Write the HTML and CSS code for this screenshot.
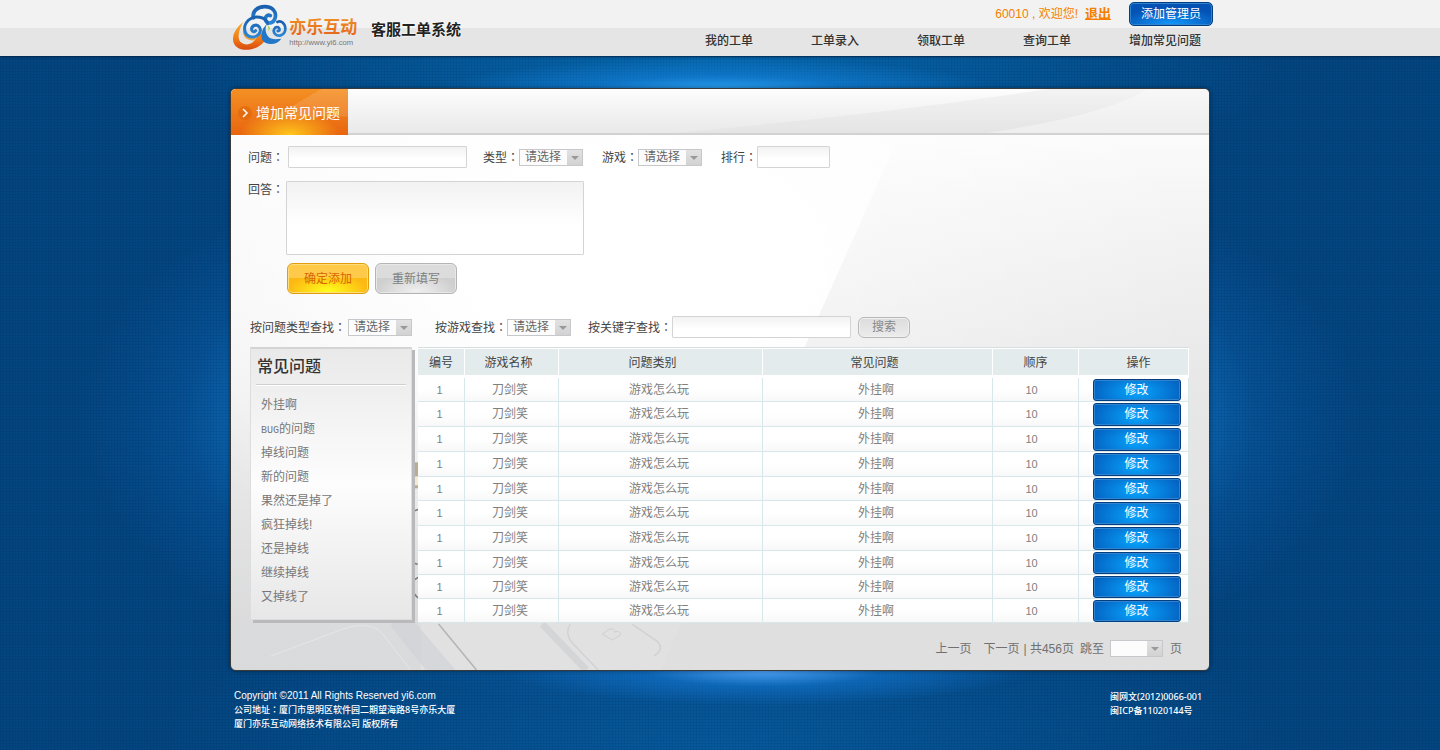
FILE: index.html
```html
<!DOCTYPE html>
<html lang="zh-CN">
<head>
<meta charset="utf-8">
<title>客服工单系统</title>
<link rel="stylesheet" href="styles.css">
</head>
<body>
<header class="top">
  <div class="wrap top-inner">
    <div class="brand">
      <svg class="logo" viewBox="0 0 408 168" role="img" aria-label="亦乐互动">
        <defs>
          <linearGradient id="blue" x1="0" y1="0" x2="0" y2="1"><stop offset="0" stop-color="#1a5fae"/><stop offset="1" stop-color="#2c86d6"/></linearGradient>
          <linearGradient id="orange" x1="0" y1="0" x2="0" y2="1"><stop offset="0" stop-color="#f9b233"/><stop offset=".6" stop-color="#f07a14"/><stop offset="1" stop-color="#d94a12"/></linearGradient>
          <linearGradient id="word" x1="0" y1="0" x2="0" y2="1"><stop offset="0" stop-color="#f29a26"/><stop offset="1" stop-color="#e4601a"/></linearGradient>
        </defs>
        <path d="M46 66C28 80 14 98 15 120C17 142 38 152 62 149C88 146 108 132 113 114C115 104 108 98 100 100C90 103 86 116 74 127C60 138 38 134 33 118C29 102 36 84 46 66Z" fill="url(#orange)"/>
        <path d="M80 116C66 122 50 112 48 96" fill="none" stroke="#f3a336" stroke-width="7" stroke-linecap="round"/>
        <path d="M76 54C72 34 88 20 110 20C134 20 147 36 141 55C136 71 119 73 113 62C109 51 118 42 127 47" fill="none" stroke="url(#blue)" stroke-width="11" stroke-linecap="round"/>
        <path d="M119 71C114 50 80 44 62 60C42 78 48 108 70 111C91 113 103 94 94 81C86 70 69 77 71 90C73 96 80 97 83 92" fill="none" stroke="url(#blue)" stroke-width="9" stroke-linecap="round"/>
        <path d="M148 66C160 60 172 71 172 86C172 104 152 113 141 102C132 91 141 78 151 82C158 87 154 95 149 93" fill="none" stroke="url(#blue)" stroke-width="8" stroke-linecap="round"/>
        <path d="M118 70C110 84 112 98 120 109C128 120 146 118 160 116C150 132 128 136 112 128C98 121 98 103 105 86Z" fill="#2277c8"/>
        <path d="M119 74L126 84L122 94Z" fill="#9bd04a"/>
        <text class="logo-word" x="184" y="99" fill="url(#word)">亦乐互动</text>
        <text class="logo-url" x="184" y="135">http://www.yi6.com</text>
      </svg>
      <h1 class="title">客服工单系统</h1>
    </div>
    <div class="top-right">
      <div class="account">
        <span class="welcome">60010 , 欢迎您!</span>
        <a class="logout" href="#">退出</a>
        <button class="btn-blue btn-admin" type="button">添加管理员</button>
      </div>
      <nav class="nav">
        <a href="#">我的工单</a>
        <a href="#">工单录入</a>
        <a href="#">领取工单</a>
        <a href="#">查询工单</a>
        <a href="#">增加常见问题</a>
      </nav>
    </div>
  </div>
</header>

<div class="stage">
<main class="wrap panel">
  <svg class="panel-art" viewBox="0 0 980 582" preserveAspectRatio="none" aria-hidden="true">
    <defs>
      <linearGradient id="shade" x1="0" y1="0" x2="0" y2="1"><stop offset="0" stop-color="#d4d4d8" stop-opacity="0"/><stop offset=".5" stop-color="#dadadc" stop-opacity=".4"/><stop offset="1" stop-color="#d8d8da" stop-opacity=".2"/></linearGradient>
      <linearGradient id="corner" x1="0" y1="0" x2="0" y2="1"><stop offset="0" stop-color="#c8cace" stop-opacity="0"/><stop offset="1" stop-color="#c8cace" stop-opacity=".3"/></linearGradient>
    </defs>
    <path d="M670 46H980V582H430Z" fill="url(#shade)"/>
    <path d="M0 300H190V582H0Z" fill="url(#corner)"/>
    <path d="M40 568L112 541Q140 532 152 546L180 582" fill="none" stroke="#e6e6e8" stroke-width="1"/>
    <path d="M172 520L225 582H195L160 538Z" fill="#cfd1d6" opacity=".6"/>
    <path d="M208 536L246 582" stroke="#b4b4b6" stroke-width="1.5"/>
    <path d="M312 536L356 582" stroke="#c9cbcf" stroke-width="7" opacity=".5"/>
    <path d="M340 536Q334 545 342 555L368 582M402 536L428 554Q434 562 424 568" fill="none" stroke="#d2d2d4" stroke-width="1.5"/>
    <path d="M372 546l7-5q6-1 5 3q7-2 6 3l-8 5z" fill="none" stroke="#cfcfd1"/>
    <path d="M180 374h8v26h-8z" fill="#b9ad90"/><path d="M182 388h6v9h-6z" fill="#f3ead2"/>
    <path d="M180 424l8-3M180 474l7 2M180 494l8-5M180 498q4 10 8 12" fill="none" stroke="#77777a" stroke-width="1.5"/>
  </svg>
  <div class="strip">
    <svg class="strip-art" viewBox="0 0 862 44" preserveAspectRatio="none" aria-hidden="true">
      <path d="M330 44Q560 22 700 0H862V44Z" fill="#d6d6d6" opacity=".25"/>
      <path d="M640 44Q760 26 800 0H862V44Z" fill="#fff" opacity=".35"/>
    </svg>
    <h2 class="tab">
      <svg class="tab-icon" viewBox="0 0 14 14" aria-hidden="true"><circle cx="7" cy="7" r="7" fill="#dd6208" opacity=".55"/><path d="M5 3L9 7L5 11" fill="none" stroke="#fff" stroke-width="1.5"/></svg>
      增加常见问题
    </h2>
  </div>

  <form class="add">
    <div class="row">
      <label class="lab" for="q">问题<span class="colon" lang="zh-TW">：</span></label><input class="text w-long" id="q" type="text">
      <label class="lab gap-l" for="type">类型<span class="colon" lang="zh-TW">：</span></label><span class="pick"><select id="type"><option>请选择</option></select></span>
      <label class="lab gap-m" for="game">游戏<span class="colon" lang="zh-TW">：</span></label><span class="pick"><select id="game"><option>请选择</option></select></span>
      <label class="lab gap-m" for="rank">排行<span class="colon" lang="zh-TW">：</span></label><input class="text w-short" id="rank" type="text">
    </div>
    <div class="row row-answer">
      <label class="lab-answer" for="answer">回答<span class="colon" lang="zh-TW">：</span></label><textarea class="text answer" id="answer"></textarea>
    </div>
    <div class="row row-buttons">
      <button class="btn btn-gold" type="button">确定添加</button>
      <button class="btn btn-grey" type="reset">重新填写</button>
    </div>
  </form>

  <form class="row search">
    <label for="f-type">按问题类型查找<span class="colon" lang="zh-TW">：</span></label><span class="pick pick-first"><select id="f-type"><option>请选择</option></select></span>
    <label class="gap-search" for="f-game">按游戏查找<span class="colon" lang="zh-TW">：</span></label><span class="pick"><select id="f-game"><option>请选择</option></select></span>
    <label class="gap-key" for="key">按关键字查找<span class="colon" lang="zh-TW">：</span></label><input class="text w-long" id="key" type="text">
    <button class="btn btn-search" type="button">搜索</button>
  </form>

  <div class="content">
    <aside class="side">
      <h3>常见问题</h3>
      <ul>
        <li><a href="#">外挂啊</a></li>
        <li><a href="#"><span class="latin">BUG</span>的问题</a></li>
        <li><a href="#">掉线问题</a></li>
        <li><a href="#">新的问题</a></li>
        <li><a href="#">果然还是掉了</a></li>
        <li><a href="#">疯狂掉线!</a></li>
        <li><a href="#">还是掉线</a></li>
        <li><a href="#">继续掉线</a></li>
        <li><a href="#">又掉线了</a></li>
      </ul>
    </aside>
    <table class="grid">
      <colgroup><col class="c1"><col class="c2"><col class="c3"><col class="c4"><col class="c5"><col class="c6"></colgroup>
      <thead>
        <tr><th>编号</th><th>游戏名称</th><th>问题类别</th><th>常见问题</th><th>顺序</th><th>操作</th></tr>
      </thead>
      <tbody>
        <tr><td>1</td><td>刀剑笑</td><td>游戏怎么玩</td><td>外挂啊</td><td>10</td><td><button class="btn-blue btn-edit" type="button">修改</button></td></tr>
        <tr><td>1</td><td>刀剑笑</td><td>游戏怎么玩</td><td>外挂啊</td><td>10</td><td><button class="btn-blue btn-edit" type="button">修改</button></td></tr>
        <tr><td>1</td><td>刀剑笑</td><td>游戏怎么玩</td><td>外挂啊</td><td>10</td><td><button class="btn-blue btn-edit" type="button">修改</button></td></tr>
        <tr><td>1</td><td>刀剑笑</td><td>游戏怎么玩</td><td>外挂啊</td><td>10</td><td><button class="btn-blue btn-edit" type="button">修改</button></td></tr>
        <tr><td>1</td><td>刀剑笑</td><td>游戏怎么玩</td><td>外挂啊</td><td>10</td><td><button class="btn-blue btn-edit" type="button">修改</button></td></tr>
        <tr><td>1</td><td>刀剑笑</td><td>游戏怎么玩</td><td>外挂啊</td><td>10</td><td><button class="btn-blue btn-edit" type="button">修改</button></td></tr>
        <tr><td>1</td><td>刀剑笑</td><td>游戏怎么玩</td><td>外挂啊</td><td>10</td><td><button class="btn-blue btn-edit" type="button">修改</button></td></tr>
        <tr><td>1</td><td>刀剑笑</td><td>游戏怎么玩</td><td>外挂啊</td><td>10</td><td><button class="btn-blue btn-edit" type="button">修改</button></td></tr>
        <tr><td>1</td><td>刀剑笑</td><td>游戏怎么玩</td><td>外挂啊</td><td>10</td><td><button class="btn-blue btn-edit" type="button">修改</button></td></tr>
        <tr><td>1</td><td>刀剑笑</td><td>游戏怎么玩</td><td>外挂啊</td><td>10</td><td><button class="btn-blue btn-edit" type="button">修改</button></td></tr>
      </tbody>
    </table>
  </div>

  <div class="pager">
    <a href="#">上一页</a>
    <a class="next" href="#">下一页</a>
    <span>| 共456页</span>
    <label class="jump" for="page">跳至</label>
    <span class="pick pick-page"><select id="page"><option></option></select></span>
    <span>页</span>
  </div>
</main>

<footer class="wrap foot">
  <div>
    <p class="copy">Copyright ©2011 All Rights Reserved yi6.com</p>
    <p>公司地址<span class="colon" lang="zh-TW">：</span>厦门市思明区软件园二期望海路8号亦乐大厦</p>
    <p>厦门亦乐互动网络技术有限公司 版权所有</p>
  </div>
  <div class="licence">
    <p>闽网文(2012)0066-001</p>
    <p>闽ICP备11020144号</p>
  </div>
</footer>
</div>
</body>
</html>
```
FILE: styles.css
```css
* { box-sizing: border-box; }
body {
  margin: 0;
  min-height: 100vh;
  display: flex;
  flex-direction: column;
  background: #02437e;
  color: #444;
  font: 12px/16px "Liberation Sans", "Noto Sans CJK SC", sans-serif;
}
h1, h2, h3, p, ul { margin: 0; padding: 0; }
ul { list-style: none; }
a { color: inherit; text-decoration: none; }
button, input, select, textarea { font: inherit; color: inherit; margin: 0; }
.wrap { width: 100%; max-width: 980px; margin: 0 auto; }
.colon { font-family: "Noto Sans CJK TC", sans-serif; }

/* header */
.top {
  position: relative;
  background: linear-gradient(#f2f2f2 50%, #e5e5e5 50%);
  box-shadow: 0 1px 2px #01264a;
}
.top-inner { display: flex; justify-content: space-between; height: 56px; padding-left: 1px; }
.brand { display: flex; align-items: center; margin-left: -3px; }
.logo { width: 136px; height: 56px; }
.logo-word { font: 700 51px "Noto Sans CJK SC", sans-serif; }
.logo-url { font: 23px "Liberation Sans", sans-serif; fill: #777; }
.title {
  margin-left: 7px;
  padding-top: 4px;
  color: #222;
  font-size: 15px;
  line-height: 20px;
  text-shadow: 0 0 2px #fff, 0 0 2px #fff;
}
.top-right { margin-right: -3px; }
.account { display: flex; justify-content: flex-end; align-items: center; height: 27px; color: #f57f00; }
.welcome { padding-right: 7px; }
.logout { font-weight: 700; font-size: 13px; text-decoration: underline; }
.nav { display: flex; gap: 58px; padding: 6px 12px 0 0; color: #333; font-weight: 500; }

.btn-blue {
  border: 1px solid #033e80;
  border-radius: 3px;
  padding: 0;
  color: #fff;
  text-align: center;
  background: radial-gradient(ellipse 55% 110% at 50% 60%, #06a6ff, #0560bf 100%);
  box-shadow: inset 0 0 0 1px #2f83cf;
}
.btn-admin { width: 84px; height: 24px; margin-left: 18px; border-radius: 5px; background: radial-gradient(ellipse 65% 80% at 50% 100%, #139bfd, #0452b4); }
.btn-edit { display: block; width: 88px; height: 23px; margin: 1px auto 0; line-height: 19px; }

/* blue stage */
.stage {
  flex: 1;
  padding-top: 32px;
  background:
    radial-gradient(ellipse 280px 32px at 50% 34px, #2b9ff2, rgba(20,130,220,.6) 45%, transparent),
    radial-gradient(ellipse 260px 34px at 53% 615px, #4a9ff2, rgba(20,120,210,.55) 45%, transparent),
    repeating-linear-gradient(90deg, rgba(0,20,50,.08) 0 1px, transparent 1px 3px),
    repeating-linear-gradient(rgba(0,20,50,.08) 0 1px, transparent 1px 3px),
    radial-gradient(ellipse 640px 300px at 50% 52%, #0e6cba 70%, rgba(8,90,165,.5) 84%, transparent 100%),
    radial-gradient(ellipse 560px 160px at 50% 0, #0569b0, transparent),
    radial-gradient(ellipse 560px 180px at 50% 100%, #06599c, transparent),
    #034580;
}

/* panel */
.panel {
  position: relative;
  padding-bottom: 13px;
  border: 1px solid #3a3a3a;
  border-radius: 6px;
  overflow: hidden;
  background:
    radial-gradient(ellipse 560px 330px at 42% 30%, #fff 30%, rgba(255,255,255,0)),
    linear-gradient(#fdfdfd, #f4f4f4 40%, #e1e1e1 92%);
  box-shadow: 0 0 4px rgba(0,0,0,.4);
}
.panel > * { position: relative; }
.panel > .panel-art { position: absolute; inset: 0; width: 100%; height: 100%; }
.strip {
  height: 46px;
  border-bottom: 2px solid #d2d2d2;
  background: linear-gradient(#fdfdfd, #e9e9e9);
}
.strip-art { position: absolute; right: 0; top: 0; width: 88%; height: 44px; }
.tab {
  position: relative;
  display: flex;
  align-items: center;
  gap: 4px;
  width: 117px;
  height: 46px;
  padding: 2px 0 0 7px;
  color: #fff;
  font-size: 14px;
  font-weight: 400;
  white-space: nowrap;
  background:
    radial-gradient(ellipse 50px 24px at 50% 100%, #ffc81c, transparent),
    linear-gradient(150deg, transparent 55%, rgba(255,255,255,.12) 0) 0 0 / 100% 60% no-repeat,
    linear-gradient(#f49024, #e8650f);
}
.tab-icon { width: 14px; height: 14px; }

/* forms */
.row { display: flex; align-items: center; }
.add { padding: 11px 17px 0; }
.lab { width: 36px; padding-top: 1px; white-space: nowrap; }
#q { margin-left: 4px; }
.gap-l { margin-left: 16px; }
.gap-m { margin-left: 19px; }
.text {
  height: 22px;
  padding: 2px 4px;
  border: 1px solid #d4d4d6;
  border-radius: 1px;
  background: linear-gradient(#f2f2f2, #fff 60%);
}
.w-long { width: 179px; }
.w-short { width: 73px; }
.row-answer { align-items: flex-start; padding-top: 13px; }
.lab-answer { width: 38px; }
.answer { width: 298px; height: 74px; resize: none; display: block; }
.row-buttons { gap: 6px; padding: 8px 0 0 39px; }
.btn { border-radius: 6px; padding: 0; text-align: center; }
.btn-gold, .btn-grey { width: 82px; height: 31px; }
.btn-gold {
  border: 1px solid #e29c0c;
  color: #d96500;
  background:
    radial-gradient(ellipse 40px 18px at 50% 95%, #ffff1c, transparent),
    linear-gradient(#ffc94a 50%, #fdb913 50%);
  box-shadow: inset 0 0 0 1px #ffdc7c;
}
.btn-grey {
  border: 1px solid #b4b4b4;
  color: #808080;
  background:
    radial-gradient(ellipse 40px 18px at 50% 95%, #f0f0f0, transparent),
    linear-gradient(#dcdcdc 50%, #cfcfcf 50%);
  box-shadow: inset 0 0 0 1px #e8e8e8;
}
.btn-search {
  width: 52px;
  height: 21px;
  margin-left: 7px;
  border: 1px solid #b8b8b8;
  color: #888;
  line-height: 18px;
  background: linear-gradient(#dcdcdc, #ececec);
  box-shadow: inset 0 0 0 1px #f0f0f0;
}
.pick { position: relative; display: block; width: 64px; height: 17px; }
.pick select {
  appearance: none;
  display: block;
  width: 100%;
  height: 100%;
  padding: 0 16px 0 5px;
  border: 1px solid #c6c8cc;
  border-radius: 0;
  color: #666;
  line-height: 15px;
  background: linear-gradient(#e2e2e2, #d2d2d2) right / 15px 100% no-repeat, #fcfcfc;
}
.pick::after {
  content: "";
  position: absolute;
  right: 4px;
  top: 7px;
  border: 4px solid transparent;
  border-top-color: #999;
  border-bottom: 0;
  pointer-events: none;
}
.search { padding: 22px 19px 0; }
.pick-first { margin-left: 2px; }
.gap-search { margin-left: 23px; }
.gap-key { margin-left: 17px; }

/* content */
.content { display: flex; align-items: flex-start; gap: 6px; padding: 9px 20px 0 19px; }
.side {
  flex: none;
  width: 162px;
  height: 273px;
  border: 1px solid #ddd;
  border-top: 2px solid #d4d4d4;
  padding: 8px 5px;
  background: linear-gradient(#e9e9e9, #fdfdfd 50%, #e8e7e8);
  box-shadow: 3px 3px 0 #b9b9bb;
}
.side h3 {
  padding: 0 1px 7px;
  border-bottom: 1px solid #d0d0d0;
  box-shadow: 0 1px 0 #fff;
  color: #333;
  font-size: 16px;
  font-weight: 500;
  line-height: 20px;
}
.side ul { padding: 8px 5px 0; color: #777; line-height: 24px; }
.latin { font: 10px "Liberation Mono", monospace; }

.grid {
  flex: 1;
  border-collapse: separate;
  border-spacing: 0;
  table-layout: fixed;
  border-top: 1px solid #d6dfe0;
  color: #808080;
  text-align: center;
}
.c1 { width: 47px; } .c2 { width: 94px; } .c3 { width: 204px; }
.c4 { width: 230px; } .c5 { width: 86px; } .c6 { width: 110px; }
.grid th {
  height: 30px;
  padding: 2px 0 0;
  border-right: 1px solid #fff;
  border-top: 1px solid #fff;
  border-bottom: 3px solid #fff;
  background: #e3ebed;
  color: #444;
  font-weight: 400;
}
.grid td {
  height: 25px;
  padding: 0;
  border-right: 1px solid #d8e8ea;
  border-bottom: 1px solid #d8e8ea;
  background: linear-gradient(#fff 50%, #f8f8f8);
  line-height: 16px;
}
.grid td:last-child { vertical-align: top; }
.grid tr:nth-child(4n+1) td,
.grid tr:nth-child(8) td,
.grid tr:last-child td { height: 24px; }
.grid tr:nth-child(4n+1) .btn-edit,
.grid tr:nth-child(8) .btn-edit,
.grid tr:last-child .btn-edit { height: 22px; }
.grid td:nth-child(-n+4) { padding-right: 3px; }
.grid th:nth-child(2), .grid th:nth-child(4) { padding-right: 6px; }
.grid th:nth-child(3) { padding-right: 16px; }
.grid td:nth-child(5) { padding-right: 8px; font-size: 11px; }
.grid td:first-child { font-size: 11px; }
.grid th:last-child { padding-left: 10px; }
.grid td:last-child { padding-left: 6px; }

.pager { display: flex; align-items: center; justify-content: flex-end; padding: 17px 27px 0 0; color: #707070; }
.next { margin-left: 12px; }
.pager span { margin-left: 4px; }
.pager .jump { margin-left: 6px; }
.pager .pick-page { width: 53px; margin: 0 3px 0 6px; }

/* footer */
.foot {
  display: flex;
  justify-content: space-between;
  padding: 18px 3px 12px 4px;
  color: #fff;
  font: 500 9px/14px "Noto Sans", "Noto Sans CJK SC", sans-serif;
}
.copy { font: 10px/14px "Liberation Sans", sans-serif; }
.licence { width: 97px; padding-top: 1px; white-space: nowrap; }
```
